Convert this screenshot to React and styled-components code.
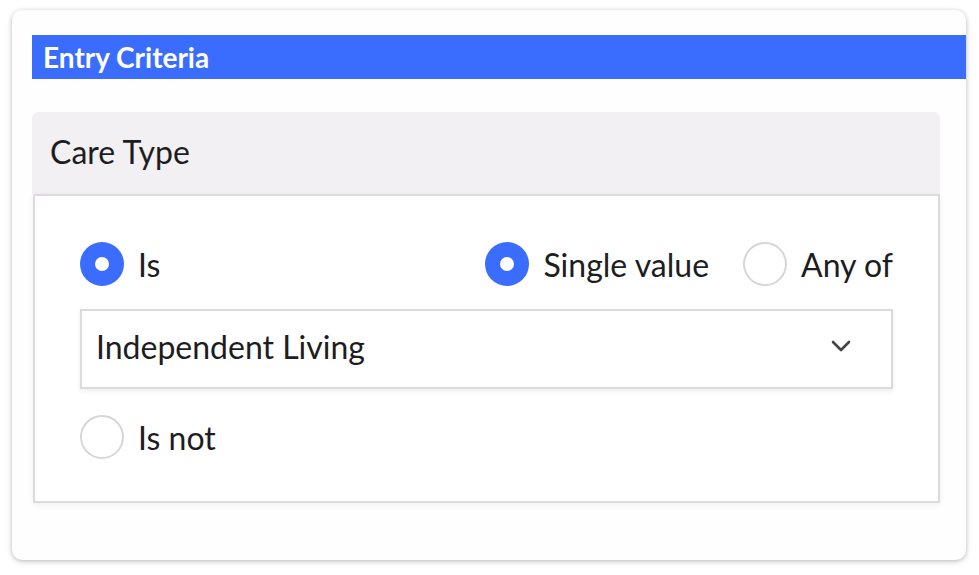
import React from "react";
import styled, { createGlobalStyle } from "styled-components";

const Global = createGlobalStyle`
  html, body { margin: 0; padding: 0; background: #ffffff; }
  body { font-family: Lato, "Noto Sans", sans-serif; color: #1d1d1f; }
  * { box-sizing: border-box; }
`;

const Page = styled.div`
  width: 979px;
  height: 575px;
  padding: 10px 13px 15px 12px;
`;

const Card = styled.div`
  height: 100%;
  background: #fefefe;
  border-radius: 10px;
  box-shadow: 0 1px 4px rgba(0,0,0,0.22), 0 2px 8px rgba(0,0,0,0.08);
  padding: 25px 0 0 20px;
  display: flex;
  flex-direction: column;
`;

const TitleBar = styled.div`
  height: 44px;
  background: #3a6dfe;
  color: #fff;
  font-weight: 700;
  font-size: 28px;
  display: flex;
  align-items: center;
  padding-left: 11px;
  padding-bottom: 1px;
`;

const Section = styled.div`
  margin-top: 33px;
  margin-right: 26px;
  display: flex;
  flex-direction: column;
`;

const SectionHeader = styled.div`
  height: 82px;
  background: #f2f0f3;
  border-radius: 6px 6px 0 0;
  display: flex;
  align-items: center;
  padding-left: 18px;
  padding-bottom: 4px;
  font-size: 32px;
  color: #1d1d1f;
`;

const SectionBody = styled.div`
  height: 309px;
  border: 2px solid #dcdadd;
  margin-left: 1px;
  background: #fff;
  box-shadow: 0 2px 6px rgba(0,0,0,0.06);
  padding: 47px 45px 0 45px;
  display: flex;
  flex-direction: column;
`;

const Row = styled.div`
  display: flex;
  align-items: center;
  justify-content: space-between;
  height: 44px;
`;

const Group = styled.div`
  display: flex;
  align-items: center;
  gap: 34px;
`;

const Option = styled.label`
  display: flex;
  align-items: center;
  gap: 14px;
  font-size: 32px;
  color: #1d1d1f;
  padding-bottom: 2px;
`;

const Radio = styled.span`
  width: 44px;
  height: 44px;
  border-radius: 50%;
  flex: none;
  display: flex;
  align-items: center;
  justify-content: center;
  background: ${p => (p.$checked ? "#3a6dfe" : "#fff")};
  border: ${p => (p.$checked ? "none" : "2px solid #d6d5d7")};
  &::after {
    content: "";
    display: ${p => (p.$checked ? "block" : "none")};
    width: 14px;
    height: 14px;
    border-radius: 50%;
    background: #fff;
  }
`;

const Select = styled.div`
  margin-top: 22px;
  height: 80px;
  border: 2px solid #dcdadd;
  box-shadow: 0 2px 5px rgba(0,0,0,0.08);
  display: flex;
  align-items: center;
  justify-content: space-between;
  padding: 0 40px 6px 14px;
  font-size: 32px;
  color: #1d1d1f;
`;

const Chevron = () => (
  <svg width="20" height="12" viewBox="0 0 20 12" fill="none">
    <path d="M2 2 L10 10 L18 2" stroke="#444" strokeWidth="2.6" strokeLinecap="round" strokeLinejoin="round" />
  </svg>
);

const LowerRow = styled(Row)`
  margin-top: 27px;
  justify-content: flex-start;
`;

export default function App() {
  return (
    <Page>
      <Global />
      <Card>
        <TitleBar>Entry Criteria</TitleBar>
        <Section>
          <SectionHeader>Care Type</SectionHeader>
          <SectionBody>
            <Row>
              <Option><Radio $checked />Is</Option>
              <Group>
                <Option><Radio $checked />Single value</Option>
                <Option><Radio />Any of</Option>
              </Group>
            </Row>
            <Select>
              <span>Independent Living</span>
              <Chevron />
            </Select>
            <LowerRow>
              <Option><Radio />Is not</Option>
            </LowerRow>
          </SectionBody>
        </Section>
      </Card>
    </Page>
  );
}
